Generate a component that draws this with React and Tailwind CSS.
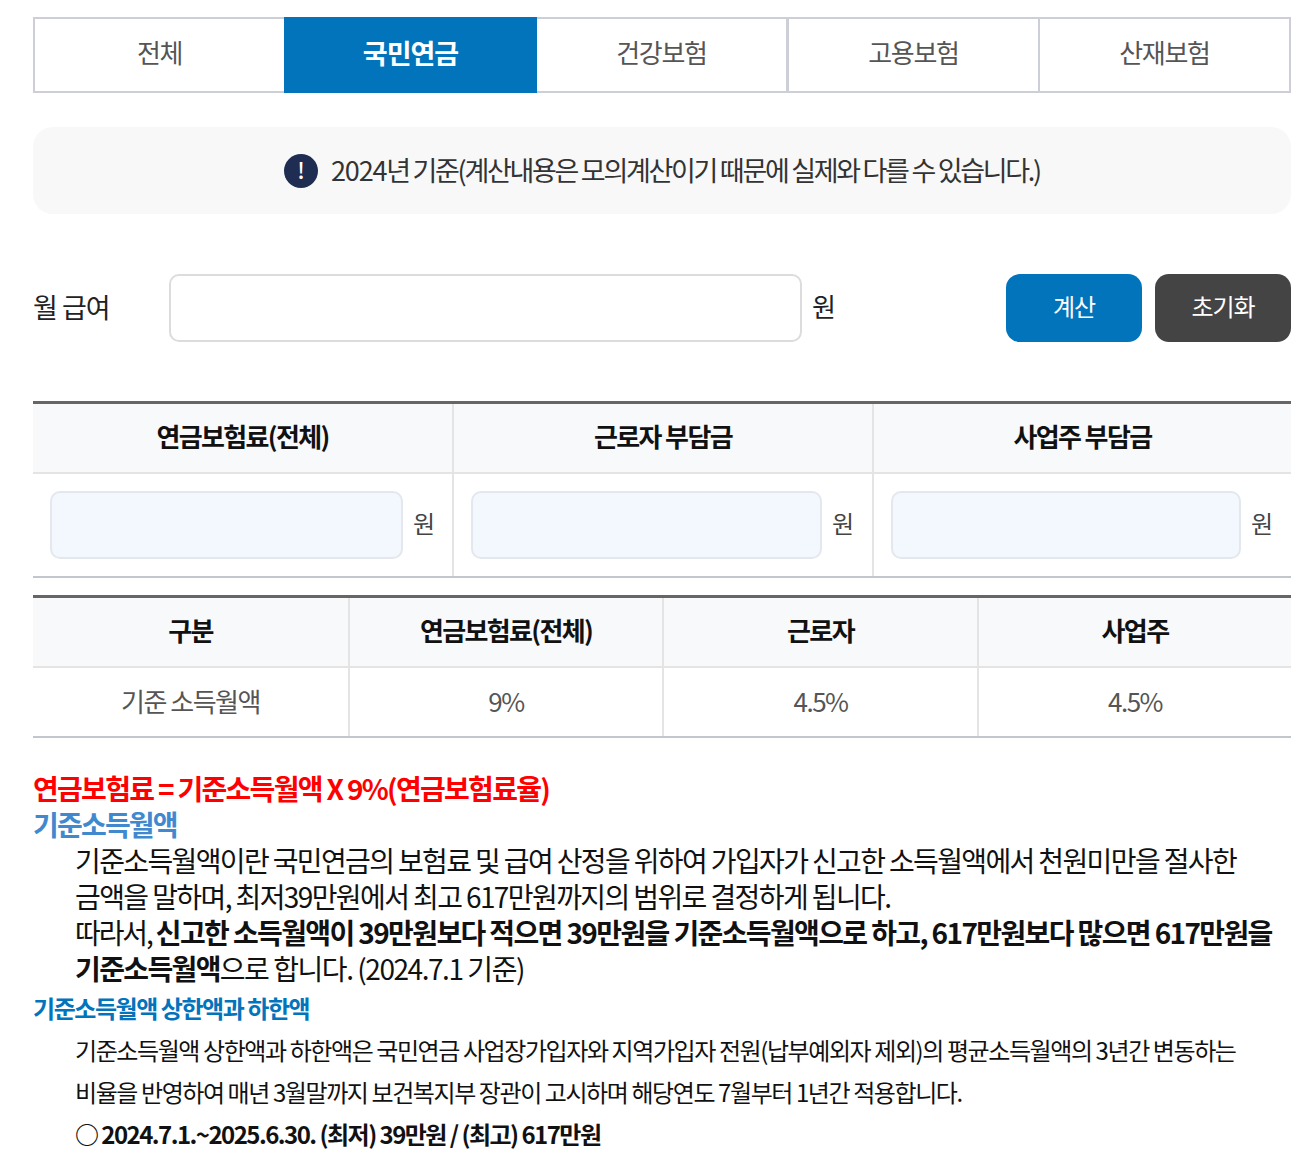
const fontStack = { fontFamily: '"Noto Sans CJK KR", "Noto Sans", sans-serif' };

const tabs = ['전체', '국민연금', '건강보험', '고용보험', '산재보험'];

function Tabs() {
  return (
    <div className="flex h-[76px]">
      {tabs.map((tab, i) => (
        <div
          key={tab}
          className={
            i === 1
              ? 'flex w-[253px] items-center justify-center bg-[#0274bc] pb-[4px] text-[27px] font-bold tracking-[-1px] text-white'
              : i === 0
                ? 'flex w-[251px] items-center justify-center border-2 border-r-0 border-[#ccced8] pb-[7px] text-[26px] tracking-[-1.3px] text-[#555]'
                : i === 2
                  ? 'flex w-[252px] items-center justify-center border-y-2 border-r-[3px] border-[#ccced8] pb-[7px] text-[26px] tracking-[-1.3px] text-[#555]'
                  : 'flex w-[251px] items-center justify-center border-y-2 border-r-2 border-[#ccced8] pb-[7px] text-[26px] tracking-[-1.3px] text-[#555]'
          }
        >
          {tab}
        </div>
      ))}
    </div>
  );
}

function Notice() {
  return (
    <div className="mt-[34px] flex h-[87px] items-center justify-center gap-[13px] rounded-[20px] bg-[#f8f8f8]">
      <span className="flex h-[34px] w-[34px] items-center justify-center rounded-full bg-[#1f2d53] pb-[2px] text-[22px] font-medium text-white">!</span>
      <span className="text-[27px] tracking-[-2.3px] text-[#333]">
        <span className="tracking-[-1.2px]">2024</span>년 기준(계산내용은 모의계산이기 때문에 실제와 다를 수 있습니다.)
      </span>
    </div>
  );
}

function SalaryForm() {
  return (
    <div className="mt-[60px] flex h-[68px] items-center">
      <span className="w-[136px] pb-[2px] text-[27px] tracking-[-1px] text-[#222]">월 급여</span>
      <input className="h-[68px] w-[633px] rounded-[10px] border-2 border-[#dcdcdc] bg-white" />
      <span className="ml-[10px] pb-[5px] text-[26px] text-[#222]">원</span>
      <button className="ml-auto h-[68px] w-[136px] rounded-[14px] bg-[#0274bc] pb-[4px] text-[24px] tracking-[-1px] text-white">계산</button>
      <button className="ml-[13px] h-[68px] w-[136px] rounded-[14px] bg-[#444] pb-[4px] text-[24px] tracking-[-1px] text-white">초기화</button>
    </div>
  );
}

function ResultCell({ last, width }) {
  return (
    <div className={last ? 'flex flex-1 items-center pl-[17px]' : width + ' flex items-center border-r-2 border-[#e4e4e4] pl-[17px]'}>
      <input
        className={
          width === 'w-[421px]'
            ? 'h-[68px] w-[353px] rounded-[10px] border-2 border-[#e4e8ee] bg-[#f3f8fe]'
            : last
              ? 'h-[68px] w-[350px] rounded-[10px] border-2 border-[#e4e8ee] bg-[#f3f8fe]'
              : 'h-[68px] w-[351px] rounded-[10px] border-2 border-[#e4e8ee] bg-[#f3f8fe]'
        }
      />
      <span className="ml-[10px] pb-[5px] text-[24px] text-[#444]">원</span>
    </div>
  );
}

function ResultTable() {
  const heads = ['연금보험료(전체)', '근로자 부담금', '사업주 부담금'];
  return (
    <div className="mt-[59px] border-t-[3px] border-b-2 border-t-[#666] border-b-[#c4c6ce]">
      <div className="flex h-[70px] border-b-2 border-[#e4e4e4] bg-[#f8f9fb]">
        {heads.map((head, i) => (
          <div
            key={head}
            className={
              i === 0
                ? 'flex w-[421px] items-center justify-center border-r-2 border-[#e4e4e4] pb-[5px] text-[26px] font-bold tracking-[-1.65px] text-[#111]'
                : i === 1
                  ? 'flex w-[420px] items-center justify-center border-r-2 border-[#e4e4e4] pb-[5px] text-[26px] font-bold tracking-[-1.65px] text-[#111]'
                  : 'flex flex-1 items-center justify-center pb-[5px] text-[26px] font-bold tracking-[-1.65px] text-[#111]'
            }
          >
            {head}
          </div>
        ))}
      </div>
      <div className="flex h-[102px]">
        <ResultCell width="w-[421px]" />
        <ResultCell width="w-[420px]" />
        <ResultCell last />
      </div>
    </div>
  );
}

function RateTable() {
  const heads = ['구분', '연금보험료(전체)', '근로자', '사업주'];
  const row = ['기준 소득월액', '9%', '4.5%', '4.5%'];
  const widths = ['w-[317px]', 'w-[314px]', 'w-[315px]', 'flex-1'];
  return (
    <div className="mt-[17px] border-t-[3px] border-b-2 border-t-[#666] border-b-[#c4c6ce]">
      <div className="flex h-[70px] border-b-2 border-[#e4e4e4] bg-[#f8f9fb]">
        {heads.map((head, i) => (
          <div key={head} className={`${widths[i]} flex items-center justify-center pb-[5px] text-[26px] font-bold tracking-[-1.65px] text-[#111] ${i < 3 ? 'border-r-2 border-[#e4e4e4]' : ''}`}>
            {head}
          </div>
        ))}
      </div>
      <div className="flex h-[68px]">
        {row.map((cell, i) => (
          <div key={i} className={`${widths[i]} flex items-center justify-center pb-[4px] text-[26px] tracking-[-1.5px] text-[#555] ${i < 3 ? 'border-r-2 border-[#e4e4e4]' : ''}`}>
            {cell}
          </div>
        ))}
      </div>
    </div>
  );
}

function Description() {
  return (
    <div className="mt-[32px] text-[#111]">
      <p className="text-[28px] leading-[36px] font-bold tracking-[-1.7px] text-[#ff0000]">연금보험료 = 기준소득월액 X 9%(연금보험료율)</p>
      <p className="text-[28px] leading-[36px] font-bold tracking-[-1.8px] text-[#4089cf]">기준소득월액</p>
      <div className="pl-[42px] text-[28px] leading-[36px] tracking-[-1.63px]">
        <p className="whitespace-nowrap">기준소득월액이란 국민연금의 보험료 및 급여 산정을 위하여 가입자가 신고한 소득월액에서 천원미만을 절사한</p>
        <p className="whitespace-nowrap tracking-[-1.6px]">금액을 말하며, 최저39만원에서 최고 617만원까지의 범위로 결정하게 됩니다.</p>
        <p className="whitespace-nowrap">
          <span className="tracking-[-2.1px]">따라서, </span>
          <b>신고한 소득월액이 39만원보다 적으면 39만원을 기준소득월액으로 하고, 617만원보다 많으면 617만원을</b>
        </p>
        <p className="whitespace-nowrap">
          <b>기준소득월액</b>
          <span className="tracking-[-1.45px]">으로 합니다. (2024.7.1 기준)</span>
        </p>
      </div>
      <p className="mt-[4px] text-[24px] leading-[36px] font-bold tracking-[-1.45px] text-[#0274bc]">기준소득월액 상한액과 하한액</p>
      <div className="mt-[3px] pl-[42px] text-[24px] leading-[42px] tracking-[-1.41px]">
        <p className="whitespace-nowrap">기준소득월액 상한액과 하한액은 국민연금 사업장가입자와 지역가입자 전원(납부예외자 제외)의 평균소득월액의 3년간 변동하는</p>
        <p className="whitespace-nowrap">비율을 반영하여 매년 3월말까지 보건복지부 장관이 고시하며 해당연도 7월부터 1년간 적용합니다.</p>
        <p className="whitespace-nowrap font-bold tracking-[-1.54px]">○ 2024.7.1.~2025.6.30. (최저) 39만원 / (최고) 617만원</p>
      </div>
    </div>
  );
}

export default function App() {
  return (
    <div className="h-[1158px] overflow-hidden bg-white px-[33px] pt-[17px] pr-[22px]" style={fontStack}>
      <Tabs />
      <Notice />
      <SalaryForm />
      <ResultTable />
      <RateTable />
      <Description />
    </div>
  );
}
